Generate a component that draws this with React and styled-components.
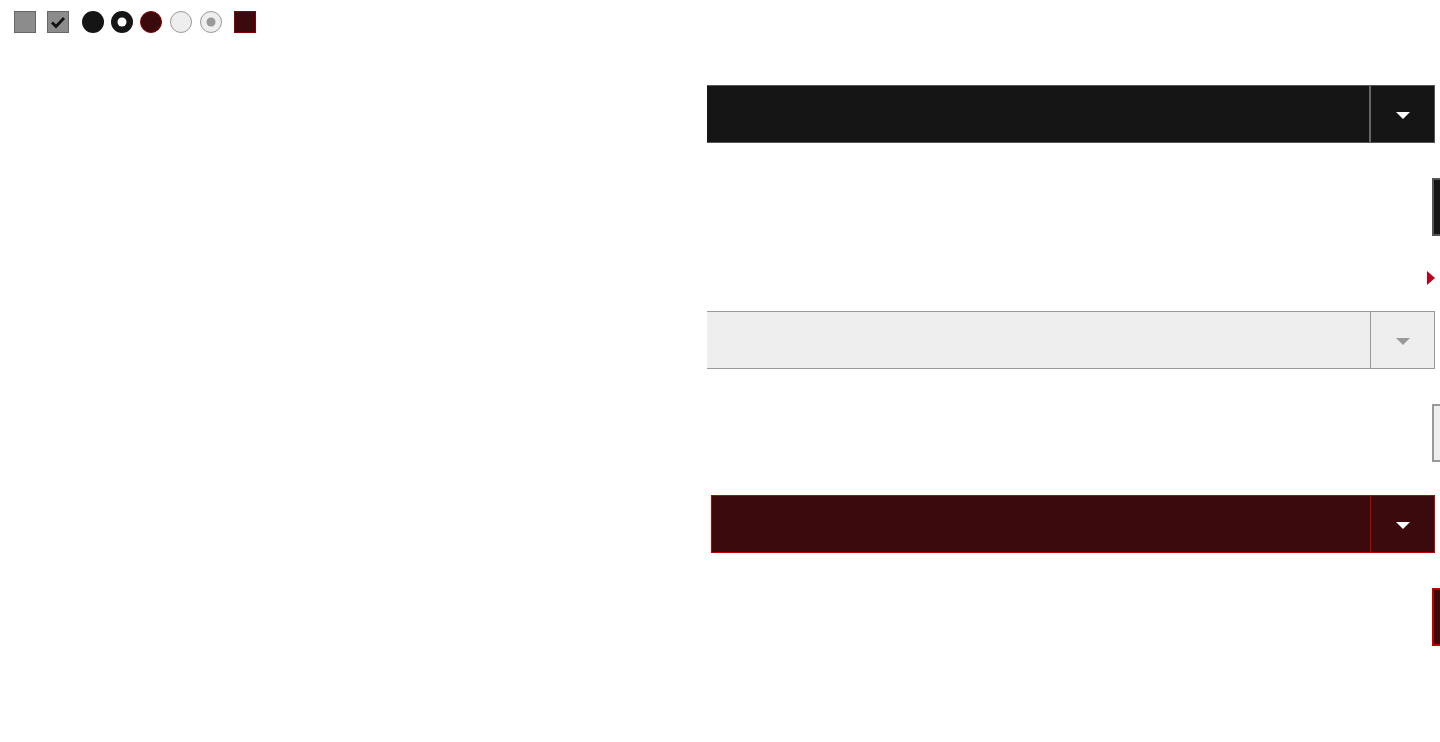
import React from 'react'
import styled, { createGlobalStyle, css } from 'styled-components'

const themes = {
  dark: { bg: '#151515', border: '#555', divider: '#666', dividerWidth: '2px', arrow: '#fff' },
  light: { bg: '#eeeeee', border: '#999', divider: '#999', dividerWidth: '1px', arrow: '#999' },
  red: { bg: '#3a0a0c', border: '#c00000', divider: '#c00000', dividerWidth: '1px', arrow: '#fff' },
}

const App = () => {
  return (
    <Page>
      <GlobalStyle />
      <Swatches>
        <Square tone="gray" />
        <Square tone="gray" checked>
          <svg width="18" height="18" viewBox="0 0 18 18">
            <path d="M3 9.5 L7 13.5 L15 5" fill="none" stroke="#111" strokeWidth="2.8" />
          </svg>
        </Square>
        <Dot tone="dark" gap="7px" />
        <Dot tone="dark" ring gap="7px" />
        <Dot tone="red" gap="8px" />
        <Dot tone="light" gap="8px" />
        <Dot tone="light" inner gap="12px" />
        <Square tone="red" />
      </Swatches>
      <Column>
        <Select variant="dark">
          <Field />
          <ArrowBox variant="dark"><Caret variant="dark" /></ArrowBox>
        </Select>
        <PeekRow><Peek variant="dark" /></PeekRow>
        <Pointer />
        <Select variant="light" top="26px">
          <Field />
          <ArrowBox variant="light"><Caret variant="light" /></ArrowBox>
        </Select>
        <PeekRow><Peek variant="light" /></PeekRow>
        <Select variant="red" top="33px" wide>
          <Field />
          <ArrowBox variant="red"><Caret variant="red" /></ArrowBox>
        </Select>
        <PeekRow><Peek variant="red" /></PeekRow>
      </Column>
    </Page>
  )
}

export default App

const GlobalStyle = createGlobalStyle`
body{
  margin: 0;
  background: #fff;
  font-family: "Liberation Sans", Arial, sans-serif;
  overflow: hidden;
}
`
const Page = styled.div`
width: 1440px;
height: 742px;
overflow: hidden;
`
const Swatches = styled.div`
display: flex;
align-items: center;
padding: 11px 0 0 14px;
height: 22px;
`
const Square = styled.div`
width: 22px;
height: 22px;
box-sizing: border-box;
display: flex;
align-items: center;
justify-content: center;
margin-right: ${p => p.checked ? '13px' : '11px'};
${p => p.tone === 'gray' && css`
  background: #8c8c8c;
  border: 1px solid #666;
`}
${p => p.tone === 'red' && css`
  background: #3a0a0c;
  border: 1px solid #8a0000;
`}
`
const Dot = styled.div`
width: 22px;
height: 22px;
border-radius: 50%;
box-sizing: border-box;
margin-right: ${p => p.gap};
position: relative;
${p => p.tone === 'dark' && css`
  background: #151515;
`}
${p => p.tone === 'red' && css`
  background: #3a0a0c;
  border: 1px solid #8a0000;
`}
${p => p.tone === 'light' && css`
  background: #eeeeee;
  border: 1px solid #999;
`}
&::after{
  content: '';
  display: ${p => (p.ring || p.inner) ? 'block' : 'none'};
  position: absolute;
  width: 9px;
  height: 9px;
  border-radius: 50%;
  top: 50%;
  left: 50%;
  transform: translate(-50%,-50%);
  background: ${p => p.ring ? '#fff' : '#999'};
}
`
const Column = styled.div`
display: flex;
flex-direction: column;
align-items: flex-end;
padding-top: 52px;
`
const Select = styled.div`
display: flex;
width: ${p => p.wide ? '724px' : '728px'};
height: 58px;
box-sizing: border-box;
margin-right: 5px;
margin-top: ${p => p.top || '0'};
background: ${p => themes[p.variant].bg};
border: 1px solid ${p => themes[p.variant].border};
border-left: ${p => p.variant === 'red' ? `1px solid ${themes.red.border}` : 'none'};
`
const Field = styled.div`
flex: 1;
`
const ArrowBox = styled.div`
width: 63px;
display: flex;
align-items: center;
justify-content: center;
border-left: ${p => themes[p.variant].dividerWidth} solid ${p => themes[p.variant].divider};
`
const Caret = styled.div`
width: 0;
height: 0;
border-left: 7px solid transparent;
border-right: 7px solid transparent;
border-top: 7px solid ${p => themes[p.variant].arrow};
margin-top: 2px;
`
const PeekRow = styled.div`
width: 100%;
display: flex;
justify-content: flex-end;
margin-top: 35px;
`
const Peek = styled.div`
width: 8px;
height: 58px;
box-sizing: border-box;
background: ${p => themes[p.variant].bg};
border: 2px solid ${p => themes[p.variant].border};
border-right: none;
`
const Pointer = styled.div`
width: 0;
height: 0;
margin-top: 35px;
margin-right: 5px;
border-top: 7px solid transparent;
border-bottom: 7px solid transparent;
border-left: 8px solid #c0001a;
`
